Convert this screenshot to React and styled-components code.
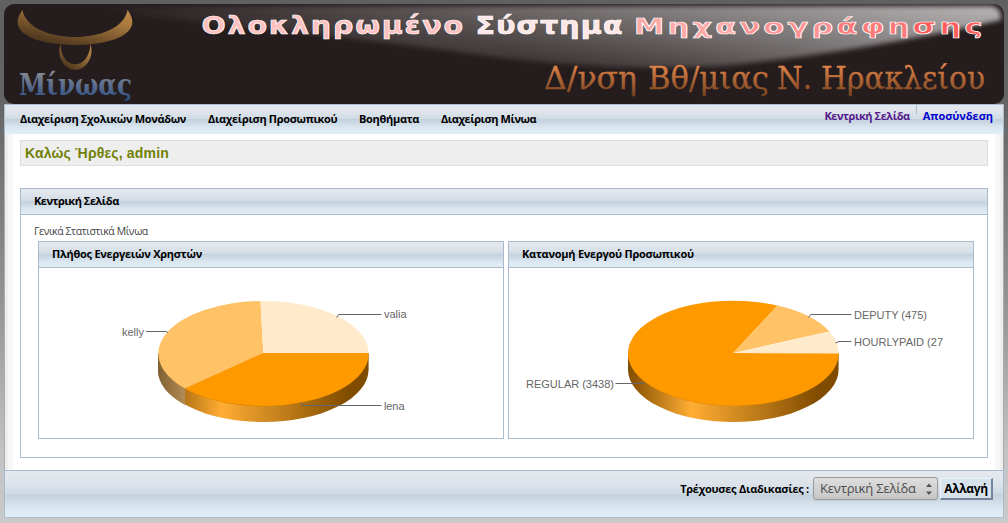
import React from "react";
import styled, { createGlobalStyle } from "styled-components";

const GlobalStyle = createGlobalStyle`
  html { min-height: 100%; background: linear-gradient(#606060 0px, #646464 100px, #969696 310px, #c2c2c2 450px, #cacaca 523px); }
  body { margin: 0; font-family: "Open Sans", "Noto Sans", sans-serif; font-size: 11px; color: #000; overflow: hidden; }
  * { box-sizing: border-box; }
`;

const line = "#a9bccd";
const barFill =
  "linear-gradient(#e4e7ee 0%, #e0e5ec 20%, #d0dbe4 49%, #c3d1de 50%, #dce8f1 80%, #e2edf5 100%)";

const Page = styled.div`
  width: 1000px;
  margin: 4px auto 0;
  display: flex;
  flex-direction: column;
`;

const Banner = styled.svg`
  display: block;
  width: 1000px;
  height: 100px;
`;

const NavBar = styled.nav`
  height: 30px;
  display: flex;
  justify-content: space-between;
  padding: 0 10px 0 15px;
  border: solid ${line};
  border-width: 1px 1px 0;
  background: ${barFill};
`;

const Menu = styled.div`
  display: flex;
  gap: 22px;
  padding-top: 6px;
`;

const MenuItem = styled.span`
  width: ${(p) => p.$w}px;
  font-weight: bold;
  line-height: 16px;
  white-space: nowrap;
  letter-spacing: ${(p) => p.$ls || 0}px;
`;

const Links = styled.div`
  display: flex;
  padding-top: 3px;
`;

const Link = styled.a`
  font-weight: bold;
  line-height: 16px;
  white-space: nowrap;
  letter-spacing: ${(p) => p.$ls || 0}px;
  color: ${(p) => (p.$visited ? "#551a8b" : "#0000cc")};
`;

const Divider = styled.span`
  width: 1px;
  height: 9px;
  margin: -3px 6px 0;
  background: ${line};
`;

const Content = styled.main`
  height: 336px;
  padding: 6px 15px 0;
  border: solid #aaa;
  border-width: 0 1px;
  background: linear-gradient(90deg, #eee 3px, #f7f7f7 3px 8px, #fff 8px 990px, #f7f7f7 990px 995px, #eee 995px);
`;

const Welcome = styled.h1`
  margin: 0 0 22px;
  height: 26px;
  padding-left: 4px;
  border: 1px solid #ddd;
  background: #eee;
  color: #718005;
  font: bold 14px/24px "Liberation Sans", sans-serif;
  letter-spacing: 0.17px;
`;

const Panel = styled.section`
  height: ${(p) => p.$h}px;
  flex: 1;
  border: 1px solid ${line};
  background: #fff;
`;

const PanelTitle = styled.h2`
  margin: 0;
  height: 26px;
  padding-left: 13px;
  border-bottom: 1px solid ${line};
  background: ${barFill};
  font-size: 11px;
  line-height: 24px;
  letter-spacing: ${(p) => p.$ls || 0}px;
`;

const Caption = styled.p`
  margin: 0;
  padding: 8px 0 0 13px;
  height: 26px;
  line-height: 16px;
  color: #444;
  font-size: 10.5px;
  letter-spacing: -0.4px;
`;

const Columns = styled.div`
  display: flex;
  gap: 4px;
  padding: 0 13px 0 17px;
`;

const Chart = styled.svg`
  display: block;
  width: 464px;
  height: 170px;
`;

const Footer = styled.footer`
  height: 48px;
  display: flex;
  justify-content: flex-end;
  align-items: flex-start;
  padding: 6px 10px 0;
  border: 1px solid ${line};
  background: ${barFill};
`;

const FooterLabel = styled.label`
  font-weight: bold;
  line-height: 24px;
  margin-right: 4px;
  letter-spacing: -0.25px;
`;

const Select = styled.div`
  width: 125px;
  height: 23px;
  display: flex;
  align-items: center;
  justify-content: space-between;
  padding: 0 4px 0 6px;
  border: 1px solid #9b9b9b;
  border-radius: 3px;
  background: linear-gradient(#dedede, #c6c6c6);
  box-shadow: 0 1px 1px #c4ccd3;
  color: #4c4c4c;
  font-size: 13px;
  line-height: 21px;
  letter-spacing: -0.17px;
`;

const Button = styled.button`
  width: 53px;
  height: 22px;
  margin: 1px 0 0 2px;
  padding: 1px 0 0;
  border: 1px solid;
  border-width: 1px 2px 2px 1px;
  border-color: #eaf2fb #73849d #73849d #eaf2fb;
  background: #d7e2ec;
  font: bold 12px/18px "Open Sans", "Noto Sans", sans-serif;
  color: #000;
  letter-spacing: -0.35px;
`;

const CX = 224.3;
const CY = 85.5;
const RX = 105.3;
const RY = 52.5;
const DEPTH = 16;

function Slice({ from, to, large, fill }) {
  return <path d={`M${CX} ${CY} L${from} A${RX} ${RY} 0 ${large ? 1 : 0} 1 ${to} Z`} fill={fill} />;
}

function Label({ x, y, w, children }) {
  return (
    <text x={x} y={y} fontFamily="Liberation Sans, sans-serif" fontSize="11" fill="#666" textLength={w}>
      {children}
    </text>
  );
}

const right = `${CX + RX} ${CY}`;

function PieBase({ id, split }) {
  return (
    <>
      <defs>
        <linearGradient id={id} gradientUnits="userSpaceOnUse" x1="119" y1="0" x2="330" y2="0">
          <stop offset="0" stopColor="#804c00" />
          <stop offset="0.3" stopColor="#ffad33" />
          <stop offset="0.9" stopColor="#804c00" />
          <stop offset="1" stopColor="#804c00" />
        </linearGradient>
        <linearGradient id={id + "k"} gradientUnits="userSpaceOnUse" x1="119" y1="0" x2="147" y2="0">
          <stop offset="0" stopColor="#7f6033" />
          <stop offset="1" stopColor="#b58d56" />
        </linearGradient>
      </defs>
      <path
        d={`M${CX - RX} ${CY} V${CY + DEPTH} A${RX} ${RY} 0 0 0 ${CX + RX} ${CY + DEPTH} V${CY} Z`}
        fill={`url(#${id})`}
      />
      {split && (
        <path d={`M${CX - RX} ${CY} V${CY + DEPTH} A${RX} ${RY} 0 0 0 146 137 V120 Z`} fill={`url(#${id}k)`} />
      )}
      <path
        d={`M${split ? "146 121" : `${CX - RX} ${CY}`} A${RX} ${RY} 0 0 0 ${CX + RX} ${CY} Z`}
        fill="#db8500"
      />
    </>
  );
}

function UsersPie() {
  return (
    <Chart viewBox="0 0 464 170">
      <PieBase id="usersSide" split />
      <Slice from="146.2 120.5" to="221.5 33" fill="#ffc266" />
      <Slice from="221.5 33" to={right} fill="#ffebcc" />
      <g transform="translate(0 -0.5)">
        <Slice from={right} to="146.2 121" fill="#ff9900" />
      </g>
      <path
        d="M107 63.5H127L129 64.5M297.5 49.5L299.5 46.5H342.5M261.5 134L263 137.5H342.5"
        fill="none"
        stroke="#666"
      />
      <Label x="83" y="68" w="22">kelly</Label>
      <Label x="345" y="50" w="22.5">valia</Label>
      <Label x="345" y="142" w="20.5">lena</Label>
    </Chart>
  );
}

function StaffPie() {
  return (
    <Chart viewBox="0 0 464 170">
      <PieBase id="staffSide" />
      <g transform="translate(0 -0.5)">
        <Slice from={right} to="268.5 38" large fill="#ff9900" />
        <Slice from="268.5 38" to="320.5 64" fill="#ffc266" />
        <Slice from="320.5 64" to={`${CX + RX} ${CY + 0.5}`} fill="#ffebcc" />
      </g>
      <path
        d="M299.5 49.5L301.5 46.5H342.5M326.5 75L330 73.5H342.5M106.5 115.5H134L136 114.5"
        fill="none"
        stroke="#666"
      />
      <Label x="17" y="120" w="88">REGULAR (3438)</Label>
      <Label x="345" y="51" w="73">DEPUTY (475)</Label>
      <Label x="345" y="78" w="89">HOURLYPAID (27</Label>
    </Chart>
  );
}

function Header() {
  return (
    <Banner viewBox="4 4 1000 100">
      <defs>
        <clipPath id="round">
          <rect x="4" y="4" width="1000" height="100" rx="10" />
        </clipPath>
        <linearGradient id="glossX" gradientUnits="userSpaceOnUse" x1="100" x2="1000" y1="0" y2="0">
          <stop offset="0" stopColor="#fff" stopOpacity="0" />
          <stop offset="0.5" stopColor="#fff" stopOpacity="0.38" />
          <stop offset="1" stopColor="#fff" stopOpacity="0.68" />
        </linearGradient>
        <linearGradient id="fadeY" gradientUnits="userSpaceOnUse" x1="0" x2="0" y1="4" y2="74">
          <stop offset="0" stopColor="#fff" stopOpacity="1" />
          <stop offset="1" stopColor="#fff" stopOpacity="0.15" />
        </linearGradient>
        <linearGradient id="fadeY2" gradientUnits="userSpaceOnUse" x1="520" x2="900" y1="0" y2="0">
          <stop offset="0" stopColor="#fff" stopOpacity="0" />
          <stop offset="1" stopColor="#fff" stopOpacity="0.5" />
        </linearGradient>
        <mask id="fade" maskUnits="userSpaceOnUse" x="0" y="0" width="1008" height="110">
          <rect width="1008" height="110" fill="url(#fadeY)" />
          <rect width="1008" height="110" fill="url(#fadeY2)" />
        </mask>
        <filter id="soft" x="-5%" y="-30%" width="110%" height="160%">
          <feGaussianBlur stdDeviation="2.5" />
        </filter>
        <linearGradient id="horn" x1="1" x2="0.25" y1="0" y2="1">
          <stop offset="0" stopColor="#c08a48" />
          <stop offset="0.3" stopColor="#a97a3f" />
          <stop offset="1" stopColor="#46311a" />
        </linearGradient>
        <linearGradient id="blue" gradientUnits="userSpaceOnUse" x1="0" x2="0" y1="72" y2="100">
          <stop offset="0" stopColor="#858993" />
          <stop offset="1" stopColor="#2c4f87" />
        </linearGradient>
        <linearGradient id="copper" gradientUnits="userSpaceOnUse" x1="0" x2="0" y1="64" y2="97">
          <stop offset="0" stopColor="#e5864a" />
          <stop offset="1" stopColor="#71401f" />
        </linearGradient>
        <linearGradient id="pink1" gradientUnits="userSpaceOnUse" x1="0" x2="0" y1="14" y2="40">
          <stop offset="0" stopColor="#fff0f0" />
          <stop offset="1" stopColor="#ff8888" />
        </linearGradient>
        <linearGradient id="pinkMid" gradientUnits="userSpaceOnUse" x1="0" x2="0" y1="14" y2="40">
          <stop offset="0" stopColor="#fff" />
          <stop offset="1" stopColor="#ffc4c4" />
        </linearGradient>
      </defs>
      <g clipPath="url(#round)">
        <rect x="4" y="4" width="1000" height="100" fill="#251c1d" />
        <path
          d="M60 6 H992 Q1002 8 1001 20 Q850 54 720 66 Q620 72 500 58 Q330 34 60 9 Z"
          fill="url(#glossX)"
          mask="url(#fade)"
          filter="url(#soft)"
        />
      </g>
      <path d="M22.5 10 C29 46 121 46 127.5 10 C145 33 112 45 75 45 C38 45 5 33 22.5 10Z" fill="url(#horn)" />
      <path d="M60.5 44 C61 71 89 71 90.5 44 C95 59 84 70 75.5 70 C66 70 56 59 60.5 44Z" fill="url(#horn)" />
      <text
        x="19" y="95" textLength="113" lengthAdjust="spacingAndGlyphs"
        fontFamily="DejaVu Serif, serif" fontWeight="bold" fontSize="30" fill="url(#blue)"
      >
        Μίνωας
      </text>
      <g fontFamily="DejaVu Sans, sans-serif" fontWeight="bold" stroke="#fff" strokeWidth="0.7">
        <text transform="translate(201.5 34) scale(1.14 1)" fontSize="25" textLength="229.5" fill="#ffc0c0">Ολοκληρωμένο</text>
        <text transform="translate(475.5 34) scale(1.14 1)" fontSize="25" textLength="129" fill="#ffe6e6">Σύστημα</text>
        <text transform="translate(634 34) scale(1.38 1)" fontSize="22" textLength="252.5">
          <tspan fill="#ffa8a8">Μηχα</tspan>
          <tspan fill="#ff9292">νογρ</tspan>
          <tspan fill="#ff7878">άφη</tspan>
          <tspan fill="#ff5c5c">σης</tspan>
        </text>
      </g>
      <g fontFamily="DejaVu Serif, serif" fontSize="31" fill="url(#copper)" stroke="url(#copper)" strokeWidth="0.3">
        <text x="544" y="89" textLength="93" lengthAdjust="spacingAndGlyphs">Δ/νση</text>
        <text x="648" y="89" textLength="121" lengthAdjust="spacingAndGlyphs">Βθ/μιας</text>
        <text x="777" y="89" textLength="35" lengthAdjust="spacingAndGlyphs">Ν.</text>
        <text x="821" y="89" textLength="164" lengthAdjust="spacingAndGlyphs">Ηρακλείου</text>
      </g>
    </Banner>
  );
}

export default function App() {
  return (
    <Page>
      <GlobalStyle />
      <Header />
      <NavBar>
        <Menu>
          <MenuItem $w={166} $ls={-0.33}>Διαχείριση Σχολικών Μονάδων</MenuItem>
          <MenuItem $w={129} $ls={-0.33}>Διαχείριση Προσωπικού</MenuItem>
          <MenuItem $w={60} $ls={-0.3}>Βοηθήματα</MenuItem>
          <MenuItem $w={95} $ls={-0.45}>Διαχείριση Μίνωα</MenuItem>
        </Menu>
        <Links>
          <Link $visited $ls={-0.43}>Κεντρική Σελίδα</Link>
          <Divider />
          <Link $ls={-0.05}>Αποσύνδεση</Link>
        </Links>
      </NavBar>
      <Content>
        <Welcome>Καλώς Ήρθες, admin</Welcome>
        <Panel $h={270}>
          <PanelTitle $ls={-0.47}>Κεντρική Σελίδα</PanelTitle>
          <Caption>Γενικά Στατιστικά Μίνωα</Caption>
          <Columns>
            <Panel $h={198}>
              <PanelTitle $ls={-0.25}>Πλήθος Ενεργειών Χρηστών</PanelTitle>
              <UsersPie />
            </Panel>
            <Panel $h={198}>
              <PanelTitle $ls={-0.25}>Κατανομή Ενεργού Προσωπικού</PanelTitle>
              <StaffPie />
            </Panel>
          </Columns>
        </Panel>
      </Content>
      <Footer>
        <FooterLabel>Τρέχουσες Διαδικασίες :</FooterLabel>
        <Select>
          Κεντρική Σελίδα
          <svg width="8" height="14" viewBox="0 0 8 14" fill="#555">
            <path d="M1 5L4 1.5L7 5ZM1 9.5L4 13L7 9.5Z" />
          </svg>
        </Select>
        <Button>Αλλαγή</Button>
      </Footer>
    </Page>
  );
}
